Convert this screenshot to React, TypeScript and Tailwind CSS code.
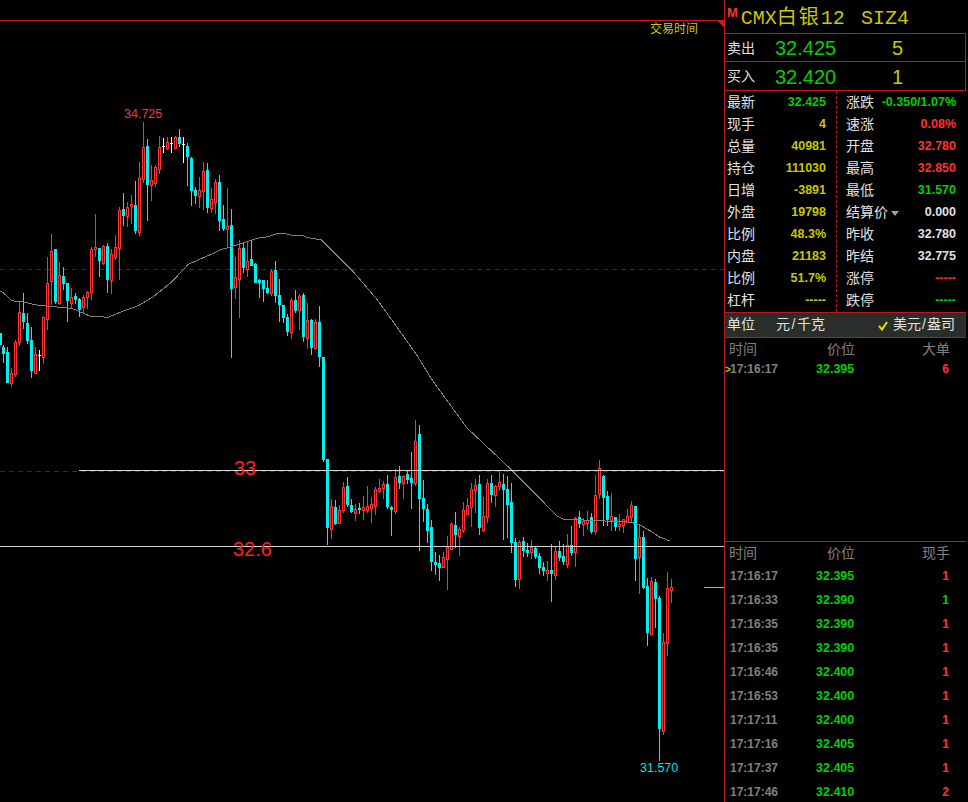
import type { ReactNode } from 'react';

type Bar = [number, string, number, number, number, number];

// candles read off the chart: [x, type, high, top, bottom, low], type r = up, c = down, w = doji
const segA: Bar[] = [
  [0, 'c', 700, 700, 735, 735], [10, 'c', 735, 742, 762, 790], [22, 'c', 740, 755, 850, 850], [34, 'r', 805, 820, 850, 860],
  [46, 'r', 720, 726, 822, 830], [58, 'r', 603, 636, 726, 738], [70, 'c', 580, 640, 666, 686], [82, 'c', 640, 670, 724, 732],
  [94, 'c', 680, 720, 813, 833], [106, 'r', 740, 762, 818, 820], [118, 'w', 750, 766, 766, 813], [130, 'r', 648, 652, 770, 792],
  [142, 'r', 470, 549, 656, 690], [154, 'r', 402, 454, 542, 615], [166, 'c', 447, 447, 606, 612], [178, 'r', 486, 526, 610, 615],
  [190, 'c', 502, 528, 552, 570], [202, 'c', 549, 549, 603, 666], [214, 'r', 565, 592, 608, 625], [226, 'c', 580, 588, 600, 612],
  [238, 'c', 595, 597, 630, 650], [250, 'r', 585, 590, 620, 640], [262, 'r', 573, 576, 592, 626], [274, 'r', 440, 447, 576, 600],
  [286, 'r', 342, 442, 446, 472], [298, 'c', 444, 444, 483, 530], [310, 'r', 434, 438, 488, 495], [322, 'c', 430, 438, 540, 578],
  [334, 'r', 448, 462, 540, 582], [346, 'r', 405, 442, 470, 480], [358, 'r', 322, 330, 443, 540], [370, 'c', 280, 327, 348, 378],
  [382, 'r', 305, 320, 347, 382], [394, 'r', 285, 313, 317, 372], [406, 'c', 243, 315, 393, 402], [418, 'r', 185, 235, 395, 407],
  [430, 'r', 66, 141, 236, 250], [442, 'c', 118, 138, 254, 362], [454, 'r', 195, 241, 254, 302], [466, 'r', 196, 202, 248, 260],
  [478, 'r', 108, 141, 206, 222], [490, 'w', 114, 139, 139, 158], [502, 'r', 112, 126, 144, 150], [514, 'w', 110, 129, 129, 158],
  [526, 'r', 108, 112, 143, 146], [538, 'c', 88, 111, 132, 140], [550, 'w', 112, 132, 132, 190], [562, 'c', 130, 138, 170, 258],
  [574, 'c', 170, 174, 272, 318], [586, 'c', 262, 270, 288, 312], [598, 'r', 232, 270, 288, 324], [610, 'r', 186, 213, 272, 330],
  [622, 'c', 190, 210, 323, 338], [634, 'r', 264, 298, 323, 340], [646, 'r', 238, 246, 305, 342], [658, 'c', 226, 246, 362, 392],
  [670, 'c', 316, 357, 386, 394], [682, 'r', 265, 379, 388, 445], [694, 'c', 328, 375, 566, 773], [706, 'r', 472, 532, 560, 596],
  [718, 'r', 420, 445, 538, 655],
];
const segB: Bar[] = [
  [70, 'c', 130, 145, 204, 218], [82, 'r', 125, 183, 206, 230], [94, 'c', 122, 178, 197, 197], [106, 'c', 188, 192, 248, 248],
  [118, 'c', 238, 240, 248, 293], [130, 'c', 240, 240, 267, 305], [142, 'c', 240, 264, 279, 282], [154, 'r', 208, 213, 278, 287],
  [166, 'c', 183, 210, 288, 308], [178, 'c', 238, 285, 315, 365], [190, 'c', 315, 315, 354, 368], [202, 'c', 342, 351, 396, 408],
  [214, 'r', 295, 300, 395, 416], [226, 'c', 270, 300, 332, 340], [238, 'r', 283, 288, 330, 390], [250, 'c', 280, 285, 411, 425],
  [262, 'r', 308, 360, 413, 447], [274, 'c', 356, 360, 444, 465], [286, 'r', 358, 366, 443, 445], [298, 'c', 318, 366, 470, 500],
  [310, 'c', 471, 471, 780, 785], [322, 'c', 777, 777, 984, 1034], [334, 'r', 898, 918, 987, 1017], [346, 'c', 900, 921, 972, 975],
  [358, 'r', 915, 930, 968, 970], [370, 'r', 845, 861, 931, 938], [382, 'c', 830, 858, 915, 922], [394, 'c', 896, 915, 936, 940],
  [406, 'r', 912, 928, 938, 963], [418, 'c', 908, 924, 930, 942], [430, 'r', 888, 922, 930, 960], [442, 'r', 858, 918, 930, 940],
  [454, 'r', 892, 912, 923, 968], [466, 'r', 860, 867, 917, 945], [478, 'r', 838, 865, 873, 878], [490, 'r', 842, 852, 864, 898],
  [502, 'c', 825, 852, 921, 926], [514, 'c', 918, 921, 930, 1008], [526, 'r', 808, 831, 933, 942], [538, 'c', 798, 828, 850, 866],
  [550, 'r', 826, 828, 849, 897], [562, 'c', 812, 822, 840, 852], [574, 'c', 756, 834, 849, 927], [586, 'r', 660, 723, 848, 858],
  [598, 'c', 675, 702, 897, 1053], [610, 'c', 840, 894, 927, 966], [622, 'c', 912, 927, 993, 1030], [634, 'c', 960, 981, 1086, 1113],
];
const segC: Bar[] = [
  [76, 'c', 426, 456, 465, 495], [88, 'c', 436, 460, 473, 513], [100, 'r', 426, 442, 470, 475], [112, 'r', 378, 412, 446, 540],
  [124, 'r', 336, 342, 416, 420], [136, 'c', 306, 346, 374, 414], [148, 'r', 352, 358, 378, 437], [160, 'r', 276, 300, 360, 368],
  [172, 'r', 264, 286, 311, 316], [184, 'r', 218, 238, 290, 350], [196, 'r', 208, 226, 239, 308], [208, 'c', 195, 222, 354, 375],
  [220, 'r', 262, 318, 360, 365], [232, 'r', 208, 220, 320, 340], [244, 'c', 196, 219, 255, 280], [256, 'r', 225, 228, 254, 290],
  [268, 'r', 182, 216, 227, 243], [280, 'c', 192, 222, 240, 390], [292, 'c', 198, 237, 285, 385], [304, 'c', 218, 276, 399, 430],
  [316, 'c', 384, 396, 510, 531], [328, 'r', 390, 396, 507, 537], [340, 'c', 380, 393, 423, 441], [352, 'c', 398, 420, 429, 442],
  [364, 'r', 390, 411, 426, 447], [376, 'c', 408, 414, 441, 448], [388, 'c', 430, 438, 474, 492], [400, 'c', 456, 471, 483, 497],
  [412, 'r', 453, 480, 490, 513], [424, 'c', 402, 480, 492, 576], [436, 'r', 412, 423, 495, 510], [448, 'c', 394, 423, 444, 452],
  [460, 'c', 402, 438, 456, 465], [472, 'r', 372, 405, 462, 474],
];
const segD: Bar[] = [
  [34, 'c', 228, 285, 309, 318], [46, 'r', 200, 204, 306, 351], [58, 'c', 183, 201, 222, 234], [70, 'r', 204, 213, 222, 258],
  [82, 'r', 183, 210, 219, 240], [94, 'c', 189, 201, 246, 252], [106, 'r', 75, 135, 243, 255], [118, 'r', 30, 54, 132, 147],
  [130, 'c', 75, 78, 144, 228], [142, 'c', 123, 138, 210, 228], [154, 'r', 129, 198, 210, 243], [166, 'c', 201, 201, 231, 243],
  [178, 'r', 192, 222, 228, 243], [190, 'r', 208, 208, 225, 248], [202, 'r', 178, 198, 216, 220], [214, 'r', 153, 165, 201, 216],
  [226, 'c', 168, 168, 327, 393], [238, 'r', 222, 261, 321, 432], [250, 'c', 243, 261, 414, 417], [262, 'c', 384, 408, 549, 588],
  [274, 'r', 381, 393, 552, 555], [286, 'c', 387, 396, 447, 534], [298, 'c', 438, 444, 837, 933], [310, 'r', 549, 576, 843, 855],
  [322, 'r', 366, 414, 579, 618], [334, 'r', 387, 411, 420, 459],
];

const place = (bars: Bar[], ox: number, oy: number): Bar[] =>
  bars.map(([x, t, h, a, b, l]) => [
    Math.floor(ox + x / 3),
    t,
    Math.round(oy + h / 3),
    Math.round(oy + a / 3),
    Math.round(oy + b / 3),
    Math.round(oy + l / 3),
  ]);

const bars = [...place(segA, 0, 100), ...place(segB, 220, 200), ...place(segC, 410, 410), ...place(segD, 560, 450)];

const pts = (list: number[][], ox: number, oy: number) =>
  list.map(([x, y]) => `${(ox + x / 3).toFixed(1)},${(oy + y / 3).toFixed(1)}`).join(' ');

const maLine = [
  pts([[0, 573], [10, 578], [35, 602], [70, 606], [115, 616], [140, 618], [190, 623], [215, 625], [250, 640], [270, 648], [325, 652], [370, 633], [415, 617], [460, 590], [515, 546], [565, 493], [640, 460], [660, 450]], 0, 100),
  pts([[60, 132], [110, 115], [145, 110], [175, 100], [195, 100], [215, 106], [245, 106], [265, 113], [305, 120], [340, 155], [395, 210], [470, 297], [530, 380], [590, 465], [640, 545], [680, 600], [720, 655]], 220, 200),
  pts([[170, 53], [250, 128], [310, 185], [370, 245], [440, 317], [460, 328], [480, 328]], 410, 410),
  pts([[215, 217], [245, 228], [280, 248], [300, 262], [330, 273]], 560, 450),
].join(' ');

const Candle = ({ bar }: { bar: Bar }) => {
  const [x, t, hi, top, bot, lo] = bar;
  if (t === 'w') {
    return (
      <g fill="#ffffff">
        <rect x={x} y={hi} width={1} height={lo - hi} />
        <rect x={x - 1} y={top} width={3} height={1} />
      </g>
    );
  }
  const color = t === 'r' ? '#ff3232' : '#00f0f0';
  return (
    <g fill={color}>
      <rect x={x} y={hi} width={1} height={Math.max(top - hi, 0)} />
      <rect x={x} y={bot} width={1} height={Math.max(lo - bot, 0)} />
      {t === 'r' ? (
        <rect x={x - 0.5} y={top + 0.5} width={2} height={Math.max(bot - top, 2)} fill="#000000" stroke={color} strokeWidth={1} />
      ) : (
        <rect x={x - 1} y={top} width={3} height={Math.max(bot - top, 1)} />
      )}
    </g>
  );
};

const stats: [string, string, string, string, string, string][] = [
  ['最新', '32.425', 'text-[#00d000]', '涨跌', '-0.350/1.07%', 'text-[#00d000]'],
  ['现手', '4', 'text-[#c8c800]', '速涨', '0.08%', 'text-[#ff3232]'],
  ['总量', '40981', 'text-[#c8c800]', '开盘', '32.780', 'text-[#ff3232]'],
  ['持仓', '111030', 'text-[#c8c800]', '最高', '32.850', 'text-[#ff3232]'],
  ['日增', '-3891', 'text-[#c8c800]', '最低', '31.570', 'text-[#00d000]'],
  ['外盘', '19798', 'text-[#c8c800]', '结算价', '0.000', 'text-[#e0e0e0]'],
  ['比例', '48.3%', 'text-[#c8c800]', '昨收', '32.780', 'text-[#e0e0e0]'],
  ['内盘', '21183', 'text-[#c8c800]', '昨结', '32.775', 'text-[#e0e0e0]'],
  ['比例', '51.7%', 'text-[#c8c800]', '涨停', '-----', 'text-[#ff3232]'],
  ['杠杆', '-----', 'text-[#c8c800]', '跌停', '-----', 'text-[#00d000]'],
];

const ticks: [string, string, string][] = [
  ['17:16:17', '32.395', 'r'],
  ['17:16:33', '32.390', 'g'],
  ['17:16:35', '32.390', 'r'],
  ['17:16:35', '32.390', 'r'],
  ['17:16:46', '32.400', 'r'],
  ['17:16:53', '32.400', 'r'],
  ['17:17:11', '32.400', 'r'],
  ['17:17:16', '32.405', 'r'],
  ['17:17:37', '32.405', 'r'],
  ['17:17:46', '32.410', '2'],
];

const TableHead = ({ last, height }: { last: string; height: string }) => (
  <div className={`flex items-center text-[14px] text-[#808080] ${height}`}>
    <span className="ml-[4px] w-[98px]">时间</span>
    <span className="w-[95px]">价位</span>
    <span>{last}</span>
  </div>
);

const TickRow = ({ time, price, qty, qtyColor, height, mark }: { time: string; price: string; qty: string; qtyColor: string; height: string; mark?: ReactNode }) => (
  <div className={`relative flex items-center text-[12px] font-bold ${height}`}>
    {mark}
    <span className="ml-[5px] w-[86px] text-[#808080]">{time}</span>
    <span className="w-[39px] text-[12.5px] text-[#00d000]">{price}</span>
    <span className={`w-[94px] text-right ${qtyColor}`}>{qty}</span>
  </div>
);

export default function App() {
  return (
    <div className="flex h-[802px] w-[968px] overflow-hidden bg-black font-['Liberation_Sans','Noto_Sans_CJK_SC',sans-serif]">
      <div className="relative h-full w-[724px]">
        <svg width={724} height={802} className="block" shapeRendering="crispEdges">
          <rect x={0} y={20} width={724} height={1} fill="#d01818" />
          <polygon points="716,20 724,20 724,28" fill="#d01818" />
          <line x1={0} y1={269.5} x2={724} y2={269.5} stroke="#7a1010" strokeDasharray="5 4" />
          <line x1={0} y1={471.5} x2={724} y2={471.5} stroke="#7a1010" strokeDasharray="5 4" />
          {bars.map((b, i) => (
            <Candle key={i} bar={b} />
          ))}
          <polyline points={maLine} fill="none" stroke="#808080" strokeWidth={1} />
          <rect x={79} y={470} width={645} height={1} fill="#d4d4d4" />
          <rect x={0} y={546} width={724} height={1} fill="#d4d4d4" />
          <rect x={704} y={587} width={20} height={1} fill="#c8c800" />
        </svg>
        <span className="absolute left-[650px] top-[22px] text-[12px] leading-[14px] text-[#c8c800]">交易时间</span>
        <span className="absolute left-[124px] top-[107px] text-[12.5px] leading-[14px] text-[#ff3232]">34.725</span>
        <span className="absolute left-[640px] top-[761px] text-[12.5px] leading-[14px] text-[#00e0e0]">31.570</span>
        <span className="absolute left-[234px] top-[457px] text-[20px] leading-[23px] text-[#ff2020]">33</span>
        <span className="absolute left-[233px] top-[538px] text-[20px] leading-[23px] text-[#ff2020]">32.6</span>
      </div>

      <div className="h-full w-[244px] border-l border-[#c01818]">
        {/* title */}
        <div className="flex h-[33px] items-start">
          <span className="ml-[2px] mt-[5px] text-[13px] font-bold leading-[15px] text-[#ff3232]">M</span>
          <span className="ml-[3px] mt-[7px] font-['Liberation_Mono','Noto_Sans_CJK_SC',monospace] text-[20px] leading-[24px] whitespace-pre text-[#c8c800]">
            CMX<span className="tracking-[2px]">白银</span>12<span className="mr-[4px]"> </span>SIZ4
          </span>
        </div>

        {/* bid / ask */}
        <div className="w-[241px] border-y border-r border-[#c01818]">
          <div className="flex h-[28px] items-center border-b border-[#c01818]">
            <span className="ml-[2px] mt-[1px] w-[48px] text-[14px] text-[#e0e0e0]">卖出</span>
            <span className="w-[117px] text-[20px] text-[#00d000]">32.425</span>
            <span className="text-[20px] text-[#c8c800]">5</span>
          </div>
          <div className="flex h-[28px] items-center">
            <span className="ml-[2px] mt-[1px] w-[48px] text-[14px] text-[#e0e0e0]">买入</span>
            <span className="mt-[1px] w-[117px] text-[20px] text-[#00d000]">32.420</span>
            <span className="mt-[1px] text-[20px] text-[#c8c800]">1</span>
          </div>
        </div>

        {/* quote grid */}
        <div className="flex h-[221px] w-[241px]">
          <div className="w-[112px] border-r border-dashed border-[#c01818] pr-[10px]">
            {stats.map(([label, value, color], i) => (
              <div key={i} className="flex h-[22px] items-center justify-between pl-[2px]">
                <span className="text-[14px] text-[#e0e0e0]">{label}</span>
                <span className={`text-[12.5px] font-bold ${color}`}>{value}</span>
              </div>
            ))}
          </div>
          <div className="w-[129px] pl-[9px] pr-[10px]">
            {stats.map((row, i) => (
              <div key={i} className="flex h-[22px] items-center justify-between">
                <span className="flex items-center text-[14px] text-[#e0e0e0]">
                  {row[3]}
                  {row[3] === '结算价' && (
                    <span className="ml-[3px] mt-[3px] h-0 w-0 border-x-[4px] border-t-[5px] border-x-transparent border-t-[#a0a0a0]" />
                  )}
                </span>
                <span className={`text-[12.5px] font-bold ${row[5]}`}>{row[4]}</span>
              </div>
            ))}
          </div>
        </div>

        {/* unit */}
        <div className="flex h-[26px] w-[241px] items-center border-y border-[#c01818] bg-[#2a2e2a] pb-[2px] text-[14px] text-[#e0e0e0]">
          <span className="ml-[2px] w-[49px]">单位</span>
          <span className="w-[102px]">元<span className="px-[1.5px]">/</span>千克</span>
          <svg width={10} height={10} viewBox="0 0 10 10" className="mr-[5px] mt-[3px]">
            <path d="M1 5 L4 8.5 L9 1" fill="none" stroke="#e0e000" strokeWidth={2} />
          </svg>
          <span>美元<span className="px-[1px]">/</span>盎司</span>
        </div>

        {/* big orders */}
        <div className="h-[203px] pt-[1px]">
          <TableHead last="大单" height="h-[20px]" />
          <TickRow
            time="17:16:17"
            price="32.395"
            qty="6"
            qtyColor="text-[#ff3232]"
            height="h-[20px]"
            mark={<span className="absolute left-0 top-[3px] text-[10px] font-bold text-[#c8c800]">&gt;</span>}
          />
        </div>

        {/* ticks */}
        <div className="w-[241px] border-t border-[#c01818]">
          <TableHead last="现手" height="h-[22px]" />
          {ticks.map(([time, price, kind], i) => (
            <TickRow
              key={i}
              time={time}
              price={price}
              qty={kind === '2' ? '2' : '1'}
              qtyColor={kind === 'g' ? 'text-[#00d000]' : 'text-[#ff3232]'}
              height="h-[24px]"
            />
          ))}
        </div>
      </div>
    </div>
  );
}
